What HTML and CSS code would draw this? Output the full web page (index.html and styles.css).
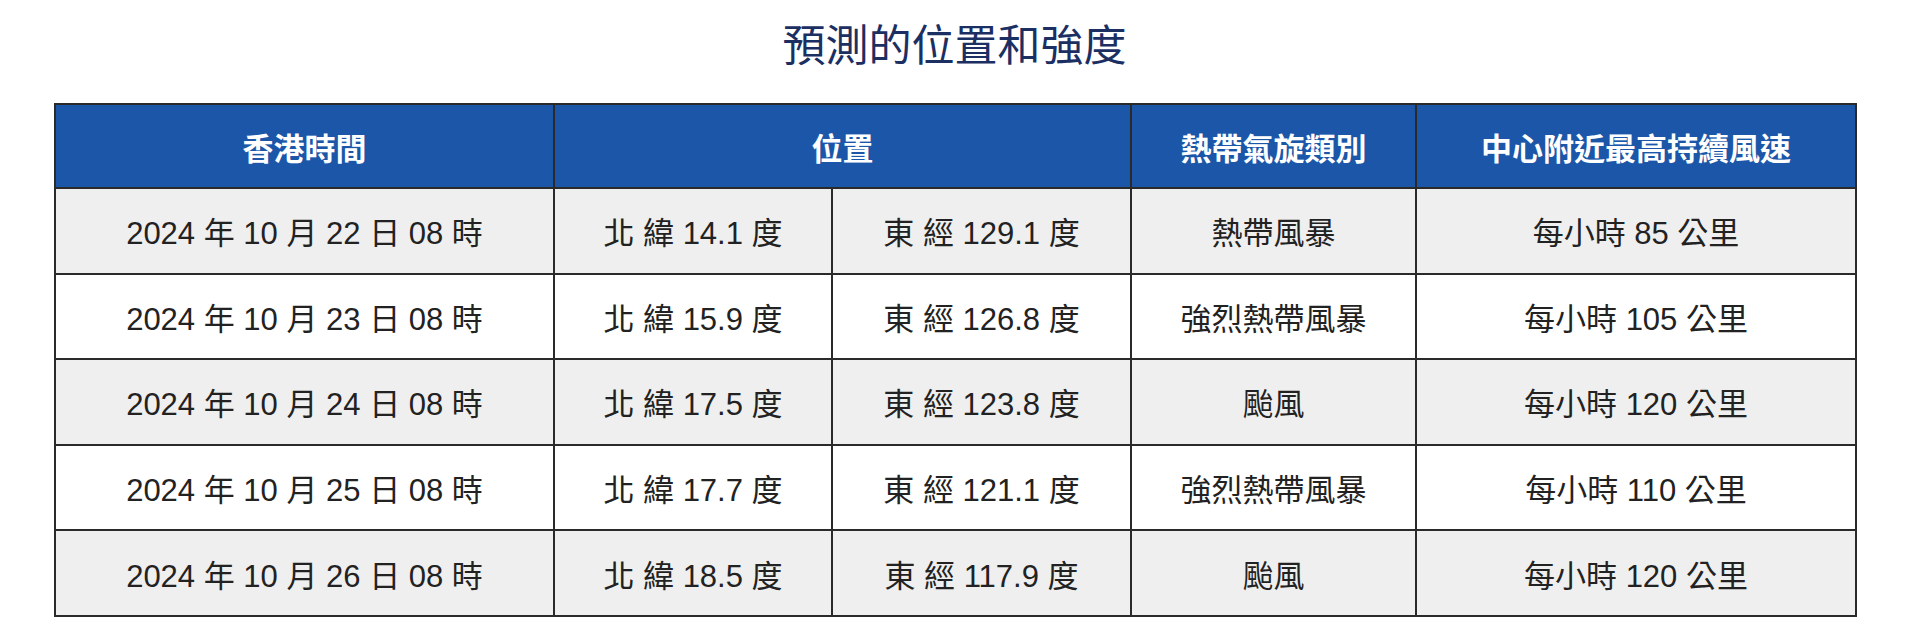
FILE: index.html
```html
<!DOCTYPE html>
<html lang="zh-Hant">
<head>
<meta charset="utf-8">
<title>預測的位置和強度</title>
<link rel="stylesheet" href="styles.css">
</head>
<body>
<div class="wrap">
  <h2 class="title">預測的位置和強度</h2>
  <table class="fc">
    <colgroup>
      <col class="c1"><col class="c2"><col class="c3"><col class="c4"><col class="c5">
    </colgroup>
    <thead>
      <tr>
        <th>香港時間</th>
        <th colspan="2">位置</th>
        <th>熱帶氣旋類別</th>
        <th>中心附近最高持續風速</th>
      </tr>
    </thead>
    <tbody>
      <tr class="odd">
        <td>2024 年 10 月 22 日 08 時</td>
        <td>北 緯 14.1 度</td>
        <td>東 經 129.1 度</td>
        <td>熱帶風暴</td>
        <td>每小時 85 公里</td>
      </tr>
      <tr>
        <td>2024 年 10 月 23 日 08 時</td>
        <td>北 緯 15.9 度</td>
        <td>東 經 126.8 度</td>
        <td>強烈熱帶風暴</td>
        <td>每小時 105 公里</td>
      </tr>
      <tr class="odd">
        <td>2024 年 10 月 24 日 08 時</td>
        <td>北 緯 17.5 度</td>
        <td>東 經 123.8 度</td>
        <td>颱風</td>
        <td>每小時 120 公里</td>
      </tr>
      <tr>
        <td>2024 年 10 月 25 日 08 時</td>
        <td>北 緯 17.7 度</td>
        <td>東 經 121.1 度</td>
        <td>強烈熱帶風暴</td>
        <td>每小時 110 公里</td>
      </tr>
      <tr class="odd">
        <td>2024 年 10 月 26 日 08 時</td>
        <td>北 緯 18.5 度</td>
        <td>東 經 117.9 度</td>
        <td>颱風</td>
        <td>每小時 120 公里</td>
      </tr>
    </tbody>
  </table>
</div>
</body>
</html>
```
FILE: styles.css
```css
html, body {
  margin: 0;
  padding: 0;
  background: #ffffff;
}
body {
  font-family: "Liberation Sans", Arial, "Noto Sans CJK TC", sans-serif;
  color: #222222;
}
.wrap {
  width: 1801px;
  padding: 14px 0 0 54px;
}
.title {
  margin: 0 0 33px 0;
  height: 56px;
  line-height: 56px;
  font-size: 43px;
  font-weight: normal;
  text-align: center;
  color: #1b2f63;
  font-family: "Noto Sans CJK TC", "Liberation Sans", sans-serif;
}
.fc {
  width: 1801px;
  table-layout: fixed;
  border-collapse: collapse;
  border: 2px solid #2a2a2a;
}
.c1 { width: 499px; }
.c2 { width: 278px; }
.c3 { width: 299px; }
.c4 { width: 285px; }
.c5 { width: 440px; }
.fc th,
.fc td {
  border: 2px solid #2a2a2a;
  text-align: center;
  vertical-align: middle;
  padding: 0;
}
.fc th {
  height: 82px;
  background: #1b56a8;
  color: #ffffff;
  font-size: 31px;
  font-weight: bold;
  font-family: "Noto Sans CJK TC", "Liberation Sans", sans-serif;
}
.fc td {
  height: 83.6px;
  font-size: 31px;
  background: #ffffff;
  color: #222222;
}
.fc tr.odd td {
  background: #efefef;
}
```
